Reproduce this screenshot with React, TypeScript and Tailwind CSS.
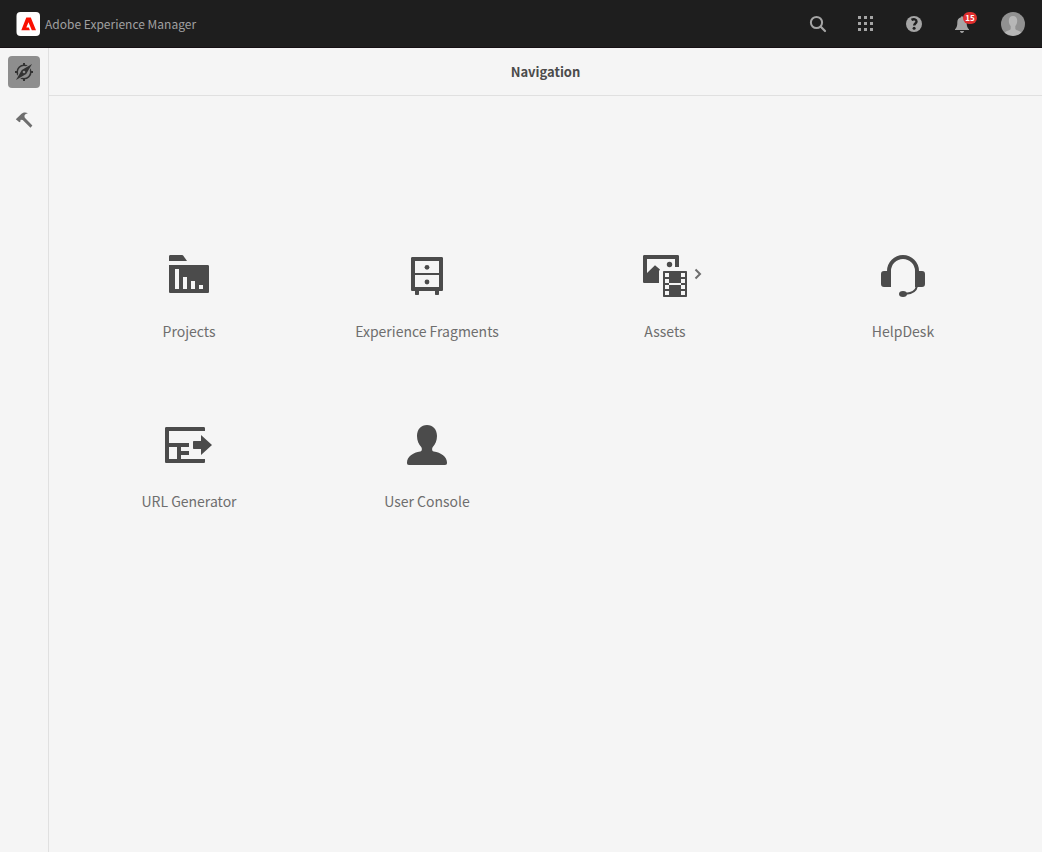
import type { ReactNode } from "react";

type Tile = { label: string; icon: ReactNode; expandable?: boolean };

function AdobeLogo() {
  return (
    <svg viewBox="0 0 24 24" className="size-6 shrink-0" aria-hidden="true">
      <rect x="0.5" width="23.5" height="24" rx="4" fill="#fff" />
      <path fill="#fa0f00" d="M10.300 5.500h4.500L20 18.200h-4.200l-3.300-8-2.200 5.200h2.500l1.100 2.800H5.300z" />
    </svg>
  );
}

function SearchIcon() {
  return (
    <svg viewBox="0 0 18 18" className="size-[18px]" fill="none" stroke="#a5a5a5" strokeWidth="2" strokeLinecap="round" aria-hidden="true">
      <circle cx="7.5" cy="7.5" r="5.6" />
      <path d="M11.800 11.800 16 16" strokeWidth="2.200" />
    </svg>
  );
}

function AppsIcon() {
  const steps = [1, 7, 13];
  return (
    <svg viewBox="0 0 18 18" className="size-[18px]" fill="#a5a5a5" aria-hidden="true">
      {steps.map((y) => steps.map((x) => <rect key={`${x}-${y}`} x={x} y={y} width="3" height="3" />))}
    </svg>
  );
}

function HelpIcon() {
  return (
    <svg viewBox="0 0 18 18" className="size-[18px]" aria-hidden="true">
      <circle cx="9" cy="9" r="8" fill="#a5a5a5" />
      <path d="M6.500 4.900c2.200-1.200 5-.6 5 1.500 0 1.800-2.300 2.100-2.300 4.200" fill="none" stroke="#1e1e1e" strokeWidth="2.400" />
      <circle cx="9.100" cy="13.200" r="1.500" fill="#1e1e1e" />
    </svg>
  );
}

function BellIcon() {
  return (
    <svg viewBox="0 0 18 18" className="size-[18px]" fill="#a5a5a5" aria-hidden="true">
      <path d="M8 2.200C8 .8 10 .8 10 2.200c2.500.5 3.700 2.500 3.700 5 0 4 .6 5.300 2.300 7V15H2v-.8c1.700-1.700 2.300-3 2.300-7 0-2.500 1.200-4.500 3.700-5zM7 16h4c0 1.100-.8 1.900-2 1.900S7 17.100 7 16z" />
    </svg>
  );
}

function Avatar() {
  return (
    <svg viewBox="0 0 24 24" className="size-6" aria-hidden="true">
      <clipPath id="avatar-clip">
        <circle cx="12" cy="12" r="12" />
      </clipPath>
      <g clipPath="url(#avatar-clip)">
        <rect width="24" height="24" fill="#919191" />
        <path fill="#b7b7b7" d="M12 4c2.700 0 4.200 2 4.200 4.800 0 2.200-.7 4-1.900 5.200v2.700c0 1.100 1.500 1.400 3.700 2.200 1.600.6 2.500 1.700 3 2.600L12 24l-9-2.500c.5-.9 1.400-2 3-2.600 2.200-.8 3.700-1.100 3.700-2.200V14C8.500 12.800 7.800 11 7.800 8.800 7.800 6 9.300 4 12 4z" />
      </g>
    </svg>
  );
}

function CompassIcon() {
  return (
    <svg viewBox="0 0 18 18" className="size-[18px]" aria-hidden="true">
      <circle cx="9" cy="9" r="6.800" fill="none" stroke="#323232" strokeWidth="1.600" />
      <path d="M9 0v2.500M9 15.500V18M0 9h2.500M15.500 9H18" stroke="#323232" strokeWidth="2" />
      <path d="M17 1 6.800 7 1 17l10.200-6z" fill="none" stroke="#8e8e8e" strokeWidth="2.200" />
      <path d="M17 1 6.800 7 1 17l10.200-6z" fill="#323232" />
      <circle cx="9" cy="9" r="1.300" fill="#8e8e8e" />
    </svg>
  );
}

function HammerIcon() {
  return (
    <svg viewBox="0 0 18 18" className="size-[18px]" fill="#6e6e6e" aria-hidden="true">
      <path d="M.8 8.300 6 3.200C7.800 1.300 10.600 1 12.900 2.300 10.700 2.800 9.700 3.700 9.400 5l.4 1.700 7.600 7.900-1.900 2.100-7.800-7.800-1.900-.2-.4.900.1.900-1.100.8z" />
    </svg>
  );
}

const tileSvg = "size-12 fill-[#4b4b4b]";

const tiles: Tile[] = [
  {
    label: "Projects",
    icon: (
      <svg viewBox="0 0 48 48" className={tileSvg} aria-hidden="true">
        <path d="M4 10V5.500C4 4.500 4.500 4 5.500 4h11c1 0 1.500.3 2 1L22 10z" />
        <path fillRule="evenodd" d="M4 14h38.500c1 0 1.500.5 1.500 1.500v25c0 1-.5 1.500-1.500 1.500h-37c-1 0-1.500-.5-1.500-1.500zM10 18v20h4V18zM18 26v12h4V26zM26 30v8h4v-8zM34 34v4h4v-4z" />
      </svg>
    ),
  },
  {
    label: "Experience Fragments",
    icon: (
      <svg viewBox="0 0 48 48" className={tileSvg} aria-hidden="true">
        <path fillRule="evenodd" d="M9.500 6h29c1 0 1.500.5 1.500 1.500v31c0 1-.5 1.500-1.500 1.500H36v3c0 .6-.4 1-1 1h-2c-.6 0-1-.4-1-1v-3H16v3c0 .6-.4 1-1 1h-2c-.6 0-1-.4-1-1v-3H9.500C8.500 40 8 39.500 8 38.500v-31C8 6.500 8.500 6 9.500 6zM12 10v12h24V10zM12 24v12h24V24z" />
        <circle cx="24" cy="16.300" r="2.400" />
        <circle cx="24" cy="31" r="2.400" />
      </svg>
    ),
  },
  {
    label: "Assets",
    expandable: true,
    icon: (
      <svg viewBox="0 0 48 48" className={tileSvg} aria-hidden="true">
        <path d="M3.500 4h33c1 0 1.500.5 1.500 1.500V16h-4V8H6v14l8-7.800 5 4.300-1 1.500v12H3.500C2.500 32 2 31.500 2 30.500v-25C2 4.500 2.500 4 3.500 4z" />
        <circle cx="28.500" cy="13.500" r="2.700" />
        <path fillRule="evenodd" d="M23 20h22c.6 0 1 .4 1 1v24c0 .6-.4 1-1 1H23c-.6 0-1-.4-1-1V21c0-.6.4-1 1-1zM24 22v4h4v-4zM24 28v4h4v-4zM24 34v4h4v-4zM24 40v4h4v-4zM40 22v4h4v-4zM40 28v4h4v-4zM40 34v4h4v-4zM40 40v4h4v-4zM28 32v2h12v-2z" />
      </svg>
    ),
  },
  {
    label: "HelpDesk",
    icon: (
      <svg viewBox="0 0 48 48" className={tileSvg} aria-hidden="true">
        <path d="M10 21v-1a14 14 0 0 1 28 0v1" fill="none" stroke="#4b4b4b" strokeWidth="4" />
        <path d="M12 20H5c-2 0-3 1-3 3v10c0 2 1 3 3 3h7zM36 20h7c2 0 3 1 3 3v10c0 2-1 3-3 3h-7z" />
        <path d="M38 35c-.8 4-4.500 7.300-11 7.800" fill="none" stroke="#4b4b4b" strokeWidth="2" />
        <ellipse cx="24" cy="43" rx="4" ry="3" />
      </svg>
    ),
  },
  {
    label: "URL Generator",
    icon: (
      <svg viewBox="0 0 48 48" className={tileSvg} aria-hidden="true">
        <path fillRule="evenodd" d="M1.500 6h37c1 0 1.500.5 1.500 1.500V10H4v12h20v4h-8v4h8v4h-8v4h24v2.500c0 1-.5 1.500-1.500 1.500h-37C.5 42 0 41.500 0 40.500v-33C0 6.500.5 6 1.500 6zM4 26v12h8V26z" />
        <path d="M29 20h7v-6l11 10-11 10v-6h-7c-.6 0-1-.4-1-1v-6c0-.6.4-1 1-1z" />
      </svg>
    ),
  },
  {
    label: "User Console",
    icon: (
      <svg viewBox="0 0 48 48" className={tileSvg} aria-hidden="true">
        <path d="M24 4c5.800 0 10 4.400 10 11 0 4.600-1.700 8.300-4.200 11-1 1.200-1 4.300.9 4.600C38 31.500 44 36 44 41.500c0 1.800-.5 2.500-2 2.500H6c-1.500 0-2-.7-2-2.500C4 36 10 31.500 17.300 30.600c1.900-.3 1.900-3.400.9-4.600C15.700 23.300 14 19.600 14 15 14 8.400 18.200 4 24 4z" />
      </svg>
    ),
  },
];

export default function App() {
  return (
    <div className="flex min-h-screen flex-col bg-[#f5f5f5] font-['Noto_Sans_CJK_SC','Noto_Sans',sans-serif]">
      <header className="flex h-12 items-center justify-between border-b border-[#161014] bg-[#1e1e1e] pr-[13px] pl-4">
        <a href="#home" className="flex items-center gap-[5px] text-[12px] leading-5 text-[#a0a0a0]">
          <AdobeLogo />
          Adobe Experience Manager
        </a>
        <div className="flex items-center gap-4">
          <button type="button" aria-label="Search" className="grid size-8 place-items-center">
            <SearchIcon />
          </button>
          <button type="button" aria-label="Solutions" className="grid size-8 place-items-center">
            <AppsIcon />
          </button>
          <button type="button" aria-label="Help" className="grid size-8 place-items-center">
            <HelpIcon />
          </button>
          <button type="button" aria-label="Notifications" className="relative grid size-8 place-items-center">
            <BellIcon />
            <span className="absolute top-1 left-[17px] h-3 w-3.5 rounded-full bg-[#e02f2f] text-center text-[8px] leading-3 font-bold text-white">15</span>
          </button>
          <button type="button" aria-label="Profile" className="ml-[3px] grid size-8 place-items-center">
            <Avatar />
          </button>
        </div>
      </header>
      <div className="flex flex-1">
        <nav aria-label="Main" className="flex w-[49px] shrink-0 flex-col gap-4 border-r border-[#e0e0e0] p-2">
          <button type="button" aria-label="Navigation" className="grid size-8 place-items-center rounded bg-[#8e8e8e]">
            <CompassIcon />
          </button>
          <button type="button" aria-label="Tools" className="grid size-8 place-items-center">
            <HammerIcon />
          </button>
        </nav>
        <main className="flex-1">
          <h1 className="flex h-12 items-center justify-center border-b border-[#e0e0e0] text-[13px] leading-5 font-bold text-[#4b4b4b]">
            Navigation
          </h1>
          <div className="grid grid-cols-4 pt-[155px] pr-5 pl-[21px]">
            {tiles.map((tile) => (
              <a key={tile.label} href="#open" className="flex h-[170px] flex-col items-center gap-5 text-[14px] leading-6 text-[#6e6e6e]">
                <span className="relative">
                  {tile.icon}
                  {tile.expandable && (
                    <svg viewBox="0 0 8 12" className="absolute top-[17px] left-[53px] h-3 w-2" fill="none" stroke="#6e6e6e" strokeWidth="2" aria-hidden="true">
                      <path d="m1.500 1.500 4.500 4.500-4.500 4.500" />
                    </svg>
                  )}
                </span>
                {tile.label}
              </a>
            ))}
          </div>
        </main>
      </div>
    </div>
  );
}
